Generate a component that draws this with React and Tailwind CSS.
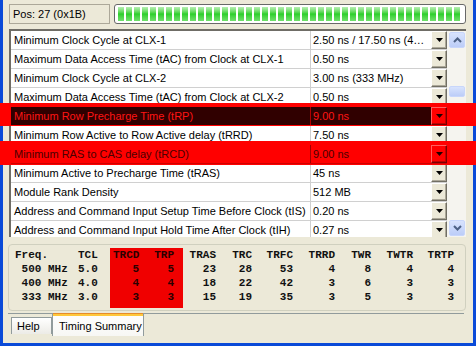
import React from "react";

const rows = [
  ["Minimum Clock Cycle at CLX-1", "2.50 ns / 17.50 ns (4…", null],
  ["Maximum Data Access Time (tAC) from Clock at CLX-1", "0.50 ns", null],
  ["Minimum Clock Cycle at CLX-2", "3.00 ns (333 MHz)", null],
  ["Maximum Data Access Time (tAC) from Clock at CLX-2", "0.50 ns", null],
  ["Minimum Row Precharge Time (tRP)", "9.00 ns", "dark"],
  ["Minimum Row Active to Row Active delay (tRRD)", "7.50 ns", null],
  ["Minimum RAS to CAS delay (tRCD)", "9.00 ns", "red"],
  ["Minimum Active to Precharge Time (tRAS)", "45 ns", null],
  ["Module Rank Density", "512 MB", null],
  ["Address and Command Input Setup Time Before Clock (tIS)", "0.20 ns", null],
  ["Address and Command Input Hold Time After Clock (tIH)", "0.27 ns", null],
];

const freq = [
  ["Freq.", "TCL", "TRCD", "TRP", "TRAS", "TRC", "TRFC", "TRRD", "TWR", "TWTR", "TRTP"],
  [" 500 MHz", "5.0", "5", "5", "23", "28", "53", "4", "8", "4", "4"],
  [" 400 MHz", "4.0", "4", "4", "18", "22", "42", "3", "6", "3", "3"],
  [" 333 MHz", "3.0", "3", "3", "15", "19", "35", "3", "5", "3", "3"],
];

function Tri({ color = "#000" }) {
  return (
    <svg width="7" height="4" viewBox="0 0 7 4">
      <polygon points="0,0 7,0 3.5,4" fill={color} />
    </svg>
  );
}

function DropBtn({ kind }) {
  if (kind) {
    return (
      <div className="flex h-[18px] w-[16px] items-center justify-center border border-t-[#ff6060] border-l-[#ff6060] border-r-[#7a0000] border-b-[#7a0000] bg-[#ff0000] shadow-[inset_-1px_-1px_0_#c00000]">
        <Tri color="#1a0000" />
      </div>
    );
  }
  return (
    <div className="flex h-[18px] w-[16px] items-center justify-center border border-t-white border-l-white border-r-[#716F64] border-b-[#716F64] bg-[#ECE9D8] shadow-[inset_-1px_-1px_0_#ACA899]">
      <Tri />
    </div>
  );
}

function Row({ label, value, kind }) {
  let rowCls = "flex h-[19px] border-b border-[#D0D0D0] bg-white text-black";
  let labCls = "w-[300px] shrink-0 border-r border-[#D0D0D0] pl-[3px] leading-[18px] whitespace-nowrap overflow-hidden";
  if (kind === "dark") {
    rowCls = "relative z-30 flex h-[19px] border-b border-[#ff0000] bg-[#300000] text-[#ff1414]";
    labCls = "w-[300px] shrink-0 border-r border-[#b00000] pl-[3px] leading-[18px] whitespace-nowrap overflow-hidden";
  } else if (kind === "red") {
    rowCls = "relative z-30 flex h-[19px] border-b border-[#d00000] bg-[#ff0000] text-[#4a0000]";
    labCls = "w-[300px] shrink-0 border-r border-[#a00000] pl-[3px] leading-[18px] whitespace-nowrap overflow-hidden";
  }
  return (
    <div className={rowCls}>
      <div className={labCls}>{label}</div>
      <div className="w-[120px] shrink-0 pl-[2px] leading-[18px] whitespace-nowrap overflow-hidden">{value}</div>
      <DropBtn kind={kind} />
    </div>
  );
}

function Chevron({ up }) {
  return (
    <svg width="9" height="6" viewBox="0 0 9 6">
      <polyline
        points={up ? "1,5 4.5,1.5 8,5" : "1,1 4.5,4.5 8,1"}
        fill="none"
        stroke="#4D6185"
        strokeWidth="2"
      />
    </svg>
  );
}

function Col({ i, w, align }) {
  return (
    <div className={`flex shrink-0 flex-col ${w} ${align}`}>
      {freq.map((r, k) => (
        <div key={k} className="h-[14px] leading-[14px] whitespace-pre">
          {r[i]}
        </div>
      ))}
    </div>
  );
}

export default function App() {
  return (
    <div className="relative h-[346px] w-[476px] overflow-hidden bg-[#0A4AD8] pl-[3px] pr-[3px] pb-[3px] font-['Liberation_Sans',Arial,sans-serif] text-[11px] text-black">
      <div className="flex h-full flex-col bg-[#ECE9D8]">
        {/* header */}
        <div className="flex pt-[4px]">
          <div className="ml-[6px] flex h-[20px] w-[101px] items-center border border-[#ACA899] pl-[3px] leading-none">
            Pos: 27 (0x1B)
          </div>
          <div className="ml-[4px] flex h-[20px] w-[352px] items-center overflow-hidden rounded-[3px] border border-[#686868] bg-white py-[2px] pl-[3px] pr-[2px]">
            <div className="flex h-[14px] gap-[2px]">
              {Array.from({ length: 43 }).map((_, k) => (
                <div
                  key={k}
                  className="h-[14px] w-[6px] shrink-0 bg-gradient-to-b from-[#b6f0b2] via-[#28cf28] to-[#6fe06b]"
                />
              ))}
            </div>
          </div>
        </div>

        {/* table */}
        <div className="ml-[6px] mt-[5px] flex h-[208px] w-[457px] overflow-hidden border-l-2 border-t-2 border-[#6f6d66] bg-white">
          <div className="w-[436px] shrink-0">
            {rows.map((r, k) => (
              <Row key={k} label={r[0]} value={r[1]} kind={r[2]} />
            ))}
          </div>
          <div className="flex w-[19px] shrink-0 flex-col bg-[#F5F4EF] pl-[2px]">
            <div className="mt-[1px] flex h-[16px] w-[16px] items-center justify-center rounded-[2px] border border-[#c8d6fb] bg-gradient-to-b from-[#d8e3fd] to-[#bccdf8]">
              <Chevron up />
            </div>
            <div className="mt-[38px] h-[11px] w-[16px] rounded-[2px] border border-[#c8d6fb] bg-gradient-to-b from-[#d8e3fd] to-[#bccdf8]" />
            <div className="mt-auto mb-[1px] flex h-[16px] w-[16px] items-center justify-center rounded-[2px] border border-[#c8d6fb] bg-gradient-to-b from-[#d8e3fd] to-[#bccdf8]">
              <Chevron />
            </div>
          </div>
        </div>

        {/* freq group */}
        <div className="ml-[5px] mt-[7px] h-[67px] w-[458px] rounded-[4px] border border-[#D0D0BF] pl-[6px] pt-[3px] font-['Liberation_Mono','Courier_New',monospace] text-[11px] font-bold text-[#111]">
          <div className="flex">
            <Col i={0} w="w-[63px]" align="text-left" />
            <Col i={1} w="w-[20px]" align="text-left" />
            <div className="ml-[12px] flex bg-[#f00000] pb-[4px] pl-[3px] pr-[9px] text-[#2a0000]">
              <Col i={2} w="w-[26px]" align="text-right" />
              <Col i={3} w="w-[35px]" align="text-right" />
            </div>
            <Col i={4} w="w-[33px]" align="text-right" />
            <Col i={5} w="w-[36px]" align="text-right" />
            <Col i={6} w="w-[41px]" align="text-right" />
            <Col i={7} w="w-[42px]" align="text-right" />
            <Col i={8} w="w-[36px]" align="text-right" />
            <Col i={9} w="w-[42px]" align="text-right" />
            <Col i={10} w="w-[41px]" align="text-right" />
          </div>
        </div>

        {/* tab line */}
        <div className="ml-[5px] mt-[2px] h-px w-[456px] bg-[#919B9C]" />

        {/* tabs */}
        <div className="ml-[8px] flex items-start">
          <div className="mt-[3px] h-[17px] w-[41px] border-l border-r border-t border-[#919B9C] bg-gradient-to-b from-white to-[#ECEBE6] pl-[5px] leading-[16px]">
            Help
          </div>
          <div className="-mt-[1px] h-[23px] w-[92px] border-l border-r border-[#919B9C] bg-gradient-to-b from-white to-[#F7F7F4]">
            <div className="h-[3px] border-t border-[#E68B2C] bg-[#FFC83C]" />
            <div className="pl-[6px] pt-[2px] leading-[16px]">Timing Summary</div>
          </div>
        </div>
      </div>

      {/* highlight bands */}
      <div className="absolute left-0 right-0 top-[103px] z-10 h-[23px] bg-[#ff0000]" />
      <div className="absolute left-0 right-0 top-[141px] z-10 h-[24px] bg-[#ff0000]" />
    </div>
  );
}
